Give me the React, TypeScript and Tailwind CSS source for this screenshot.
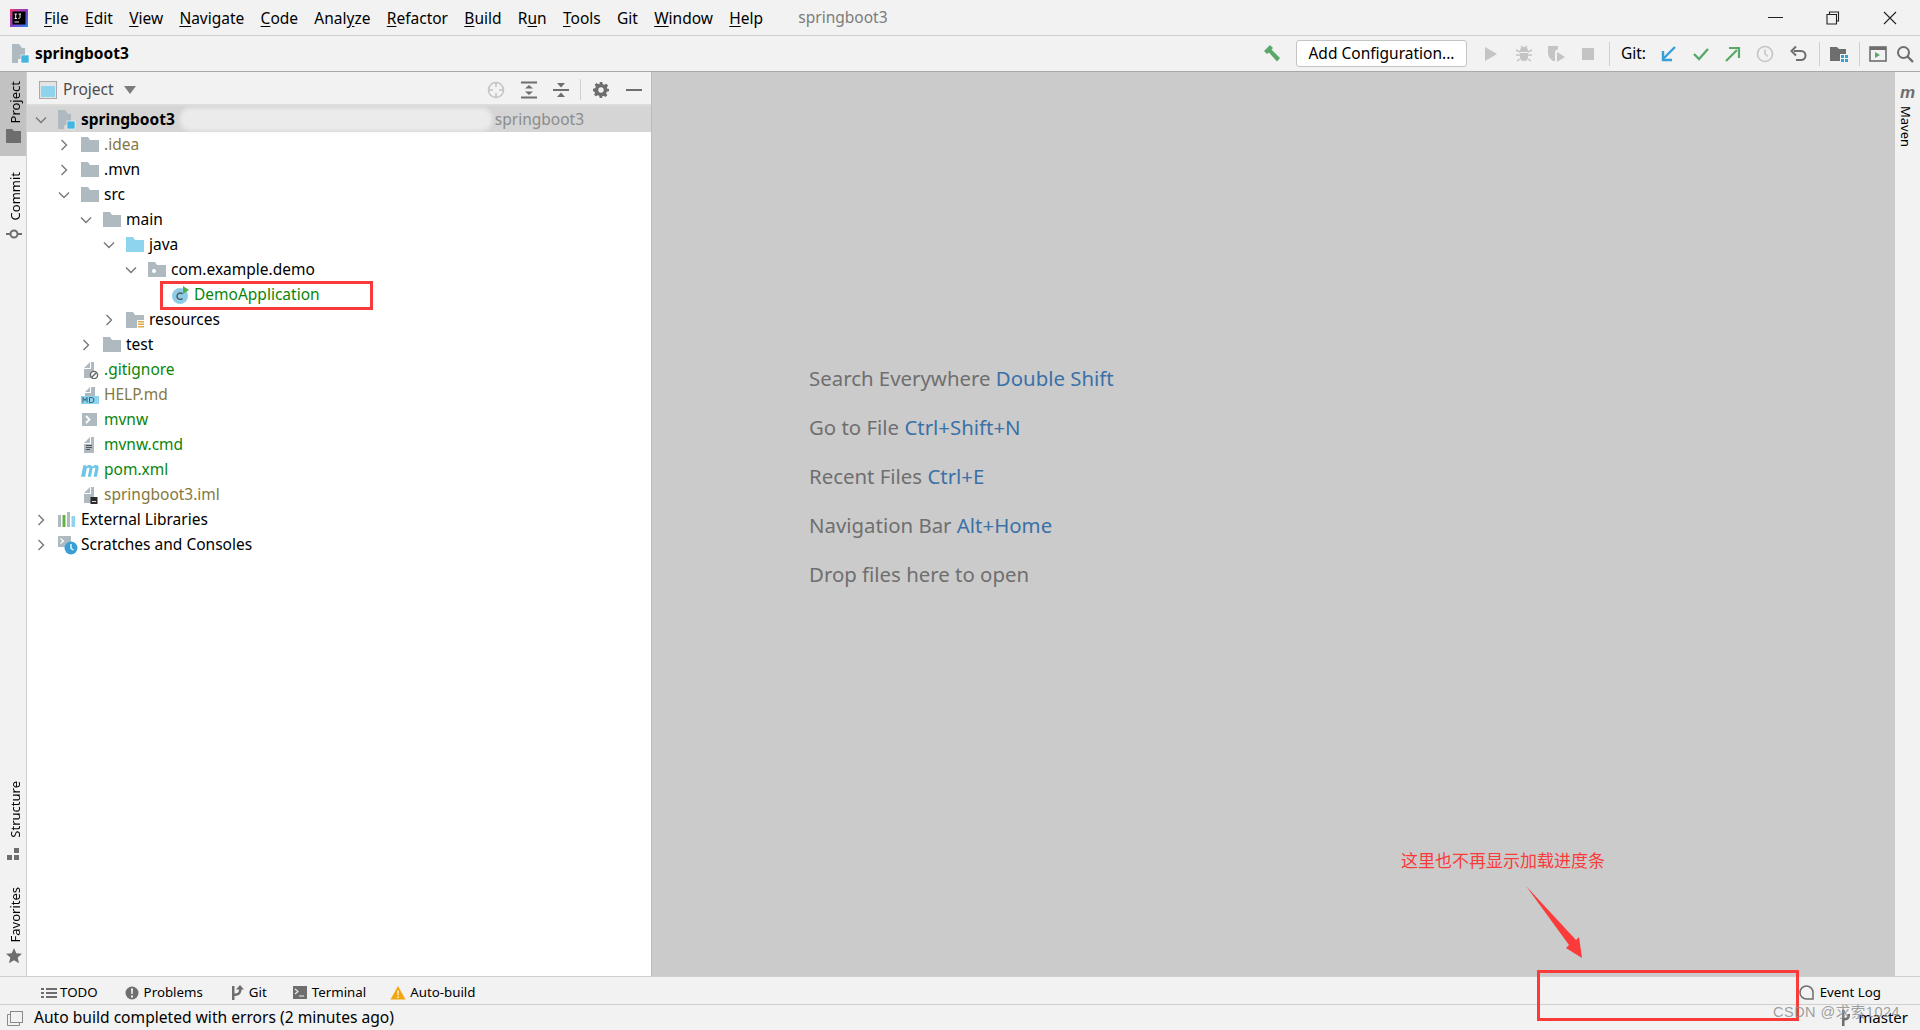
import React from "react";

const FONT = "font-['Noto_Sans','Noto_Sans_CJK_SC',sans-serif]";

const Folder = ({ color = "#afb9c0", className = "" }: { color?: string; className?: string }) => (
  <svg width="18" height="15" viewBox="0 0 18 15" className={className}>
    <path d="M0 0h7l2 3h9v12H0z" fill={color} />
  </svg>
);

const Chevron = ({ open }: { open: boolean }) => (
  <svg width="16" height="16" viewBox="0 0 16 16">
    {open ? (
      <path d="M3 5.5l5 5 5-5" fill="none" stroke="#777" strokeWidth="1.4" />
    ) : (
      <path d="M5.5 3l5 5-5 5" fill="none" stroke="#777" strokeWidth="1.4" />
    )}
  </svg>
);

const ModuleIcon = ({ size = 20 }: { size?: number }) => (
  <svg width={size} height={size} viewBox="0 0 20 20">
    <path d="M0 0h7l3 4h3v11H6v4H0z" fill="#afb9c0" />
    <rect x="9" y="11" width="8" height="8" fill="#40b6e0" stroke="#fff" strokeWidth="0.6" />
  </svg>
);

const FileBase = ({ children }: { children?: React.ReactNode }) => (
  <svg width="18" height="18" viewBox="0 0 18 18">
    <path d="M3 7l6-6v6zM3 8h7V1h3v16H3z" fill="#afb9c0" />
    {children}
  </svg>
);

type Row = { level: string; label: string; color?: string; open?: boolean; icon: React.ReactNode; chevron?: boolean };

const rows: Row[] = [
  { level: "pl-[29px]", label: ".idea", color: "text-[#85783f]", open: false, chevron: true, icon: <Folder /> },
  { level: "pl-[29px]", label: ".mvn", open: false, chevron: true, icon: <Folder /> },
  { level: "pl-[29px]", label: "src", open: true, chevron: true, icon: <Folder /> },
  { level: "pl-[51px]", label: "main", open: true, chevron: true, icon: <Folder /> },
  { level: "pl-[74px]", label: "java", open: true, chevron: true, icon: <Folder color="#8ed4ee" /> },
  {
    level: "pl-[96px]",
    label: "com.example.demo",
    open: true,
    chevron: true,
    icon: (
      <svg width="18" height="15" viewBox="0 0 18 15">
        <path d="M0 0h7l2 3h9v12H0z" fill="#afb9c0" />
        <circle cx="6" cy="9" r="2" fill="#fff" />
      </svg>
    ),
  },
  {
    level: "pl-[119px]",
    label: "DemoApplication",
    color: "text-[#0a850a]",
    icon: (
      <svg width="18" height="18" viewBox="0 0 18 18">
        <circle cx="9" cy="10" r="8" fill="#8fcde6" />
        <path d="M11.5 8a3.2 3.2 0 1 0 0 4.4" fill="none" stroke="#4a5a63" strokeWidth="1.4" />
        <path d="M12 0l6 4-6 4z" fill="#4caf50" />
      </svg>
    ),
  },
  {
    level: "pl-[74px]",
    label: "resources",
    open: false,
    chevron: true,
    icon: (
      <svg width="18" height="18" viewBox="0 0 18 18">
        <path d="M0 1h7l2 3h9v5h-7v8H0z" fill="#afb9c0" />
        <path d="M12 10h6v1.4h-6zM12 12.5h6v1.4h-6zM12 15h6v1.6h-6z" fill="#e0a94a" />
      </svg>
    ),
  },
  { level: "pl-[51px]", label: "test", open: false, chevron: true, icon: <Folder /> },
  {
    level: "pl-[29px]",
    label: ".gitignore",
    color: "text-[#0a850a]",
    icon: (
      <FileBase>
        <circle cx="13" cy="14" r="3.6" fill="#fff" stroke="#666" strokeWidth="1.4" />
        <path d="M10.5 16.5l5-5" stroke="#666" strokeWidth="1.4" />
      </FileBase>
    ),
  },
  {
    level: "pl-[29px]",
    label: "HELP.md",
    color: "text-[#85783f]",
    icon: (
      <svg width="18" height="18" viewBox="0 0 18 18">
        <path d="M4 6l5-5v5zM4 7h6V1h4v9H4z" fill="#afb9c0" />
        <rect x="0" y="10" width="18" height="8" fill="#8ed4ee" />
        <path d="M2 16.5v-5l2 3 2-3v5M8.5 11.500v5h2a2.500 2.500 0 0 0 0-5z" fill="none" stroke="#31607a" strokeWidth="1" />
      </svg>
    ),
  },
  {
    level: "pl-[29px]",
    label: "mvnw",
    color: "text-[#0a850a]",
    icon: (
      <svg width="18" height="18" viewBox="0 0 18 18">
        <rect x="1" y="2" width="15" height="13" fill="#afb9c0" />
        <path d="M5 5l3.500 3.500L5 12" fill="none" stroke="#fff" strokeWidth="1.800" />
      </svg>
    ),
  },
  {
    level: "pl-[29px]",
    label: "mvnw.cmd",
    color: "text-[#0a850a]",
    icon: (
      <FileBase>
        <path d="M5 9.500h6M5 11.500h6M5 13.500h4" stroke="#555" strokeWidth="1" />
      </FileBase>
    ),
  },
  {
    level: "pl-[29px]",
    label: "pom.xml",
    color: "text-[#0a850a]",
    icon: (
      <svg width="19" height="16" viewBox="0 0 19 16">
        <path d="M0 15L2.500 3h3l-.3 1.500C6.500 3 8 2.600 9 2.600c1.500 0 2.500.8 2.800 2C13 3.200 14.500 2.600 15.700 2.600c2.200 0 3.300 1.400 2.900 3.500L16.800 15h-3.500l1.700-8.300c.1-.8-.2-1.200-.9-1.200-.7 0-1.500.5-2 1.200L10.500 15H7.200l1.700-8.300c.1-.8-.2-1.200-.9-1.200-.7 0-1.500.5-2 1.200L4.400 15z" fill="#6fc5e6" />
      </svg>
    ),
  },
  {
    level: "pl-[29px]",
    label: "springboot3.iml",
    color: "text-[#85783f]",
    icon: (
      <FileBase>
        <rect x="9.500" y="11" width="7" height="7" fill="#2c2c2c" />
        <rect x="11" y="15" width="4" height="1" fill="#ddd" />
      </FileBase>
    ),
  },
];

const Rail = ({ label, icon, active, gap = "gap-[6px]" }: { label: string; icon: React.ReactNode; active?: boolean; gap?: string }) => (
  <div className={`flex flex-col items-center ${gap} w-[26px] pl-[1px] ${active ? "bg-[#c2c2c2] pt-[9px] pb-[13px]" : ""}`}>
    <span className="[writing-mode:vertical-rl] rotate-180 text-[13px] leading-[16px] text-black pr-[3px]">{label}</span>
    {icon}
  </div>
);

const TabIcon = ({ children }: { children: React.ReactNode }) => (
  <svg width="16" height="16" viewBox="0 0 16 16" className="shrink-0">
    {children}
  </svg>
);

const ToolIcon = ({ w = 18, children }: { w?: number; children: React.ReactNode }) => (
  <svg width={w} height="18" viewBox={`0 0 ${w} 18`} className="shrink-0">
    {children}
  </svg>
);

const Sep = ({ h = "h-[24px]" }: { h?: string }) => <div className={`w-px ${h} bg-[#cfcfcf] shrink-0`} />;

const menus: [string, string, string][] = [
  ["", "F", "ile"],
  ["", "E", "dit"],
  ["", "V", "iew"],
  ["", "N", "avigate"],
  ["", "C", "ode"],
  ["Anal", "y", "ze"],
  ["", "R", "efactor"],
  ["", "B", "uild"],
  ["R", "u", "n"],
  ["", "T", "ools"],
  ["Git", "", ""],
  ["", "W", "indow"],
  ["", "H", "elp"],
];

export default function App() {
  return (
    <div className={`${FONT} relative w-[1920px] h-[1030px] overflow-hidden bg-[#f2f2f2] flex flex-col text-[15.500px] text-black`}>
      {/* Menu bar */}
      <div className="h-[36px] shrink-0 flex items-center border-b border-[#cfcfcf] pl-[10px]">
        <svg width="18" height="18" viewBox="0 0 18 18" className="shrink-0 mr-[8px]">
          <defs>
            <linearGradient id="ij" x1="0" y1="0" x2="1" y2="1">
              <stop offset="0" stopColor="#f0366b" />
              <stop offset="0.5" stopColor="#8b3ec8" />
              <stop offset="1" stopColor="#1d8df0" />
            </linearGradient>
          </defs>
          <rect width="18" height="18" fill="url(#ij)" />
          <rect x="2.500" y="2.500" width="13" height="13" fill="#000" />
          <path d="M4.500 5h2.500M5.700 5v4.500M4.500 9.500H7M8.500 5h2.500M10 5v3.500c0 1-.8 1-1.700.8M4.500 13H9" stroke="#fff" strokeWidth="0.9" fill="none" />
        </svg>
        {menus.map(([a, u, b], i) => (
          <span key={i} className="pl-[8px] pr-[8.300px] leading-[20px] whitespace-nowrap">
            {a}
            <span className="underline underline-offset-2">{u}</span>
            {b}
          </span>
        ))}
        <span className="ml-[27px] text-[#7c7c7c]">springboot3</span>
        <div className="ml-auto flex items-center h-full">
          <div className="w-[15px] h-px bg-[#222] mr-[43px]" />
          <svg width="14" height="14" viewBox="0 0 14 14" className="mr-[43px]">
            <path d="M3.500 3V1h9v9h-2M1 3.500h9.500V13H1z" fill="none" stroke="#222" strokeWidth="1.100" />
          </svg>
          <svg width="14" height="14" viewBox="0 0 14 14" className="mr-[23px]">
            <path d="M1 1l12 12M13 1L1 13" stroke="#222" strokeWidth="1.100" />
          </svg>
        </div>
      </div>

      {/* Navigation / toolbar */}
      <div className="h-[36px] shrink-0 flex items-center border-b border-[#a9a9a9] pl-[12px]">
        <ModuleIcon />
        <span className="ml-[3px] font-bold">springboot3</span>
        <div className="ml-auto flex items-center">
          <svg width="20" height="20" viewBox="0 0 20 20" className="mr-[14px]">
            <path d="M2 7l6-6 3 3-1.500 1.500L18 14l-3 3.500-8-9L5 10z" fill="#59a869" />
          </svg>
          <div className="h-[27px] w-[171px] flex items-center justify-center bg-white border border-[#c4c4c4] rounded-[3px] mr-[16px]">
            Add Configuration...
          </div>
          <ToolIcon w={16}>
            <path d="M2 2l12 7-12 7z" fill="#c4c4c4" />
          </ToolIcon>
          <div className="w-[16px]" />
          <ToolIcon>
            <path d="M5 6a4 4 0 0 1 8 0v1H5z" fill="#c4c4c4" />
            <path d="M5 8h8v4a4 4 0 0 1-8 0z" fill="#c4c4c4" />
            <path d="M1 5l4 2M17 5l-4 2M1 10h4M17 10h-4M2 16l3-2M16 16l-3-2M6 1l2 2M12 1l-2 2" stroke="#c4c4c4" strokeWidth="1.500" />
          </ToolIcon>
          <div className="w-[14px]" />
          <ToolIcon>
            <path d="M1 1h10v3l-3 2v10H6C3 14 1 11 1 8z" fill="#c4c4c4" />
            <path d="M10 7l8 5-8 5z" fill="#c4c4c4" />
          </ToolIcon>
          <div className="w-[16px]" />
          <ToolIcon w={14}>
            <rect x="1" y="3" width="12" height="12" fill="#c4c4c4" />
          </ToolIcon>
          <div className="w-[14px]" />
          <Sep />
          <span className="ml-[11px] mr-[14px]">Git:</span>
          <ToolIcon w={16}>
            <path d="M15 2L4 13M3 6v9h9" fill="none" stroke="#389fd6" strokeWidth="2.400" />
          </ToolIcon>
          <div className="w-[17px]" />
          <ToolIcon w={16}>
            <path d="M1 9l5 5 9-10" fill="none" stroke="#59a869" strokeWidth="2.400" />
          </ToolIcon>
          <div className="w-[16px]" />
          <ToolIcon w={16}>
            <path d="M1 16L12 5M4 3h10v10" fill="none" stroke="#59a869" strokeWidth="2.200" />
          </ToolIcon>
          <div className="w-[15px]" />
          <ToolIcon>
            <circle cx="9" cy="9" r="7.500" fill="none" stroke="#c4c4c4" strokeWidth="1.600" />
            <path d="M9 4.500V9l3 2.500" fill="none" stroke="#c4c4c4" strokeWidth="1.500" />
          </ToolIcon>
          <div className="w-[16px]" />
          <ToolIcon w={17}>
            <path d="M4 6h7a4.500 4.500 0 0 1 0 9H6" fill="none" stroke="#6e6e6e" strokeWidth="2" />
            <path d="M6 1.500L1.500 6 6 10.500" fill="none" stroke="#6e6e6e" strokeWidth="2" />
          </ToolIcon>
          <div className="w-[12px]" />
          <Sep />
          <div className="w-[10px]" />
          <ToolIcon>
            <path d="M0 2h7l2 2h7v5h-6v7H0z" fill="#6e6e6e" />
            <path d="M11 10h3v3h-3zM15 10h3v3h-3zM11 14h3v3h-3zM15 14h3v3h-3z" fill="#389fd6" />
          </ToolIcon>
          <div className="w-[11px]" />
          <Sep />
          <div className="w-[9px]" />
          <ToolIcon>
            <rect x="1" y="2" width="16" height="14" fill="none" stroke="#6e6e6e" strokeWidth="1.600" />
            <rect x="1" y="2" width="16" height="3" fill="#6e6e6e" />
            <path d="M6 7l5 3-5 3z" fill="#59a869" />
          </ToolIcon>
          <div className="w-[9px]" />
          <ToolIcon>
            <circle cx="7.500" cy="7.500" r="5.500" fill="none" stroke="#6e6e6e" strokeWidth="2" />
            <path d="M11.500 11.500L17 17" stroke="#6e6e6e" strokeWidth="2.400" />
          </ToolIcon>
          <div className="w-[6px]" />
        </div>
      </div>

      {/* Main */}
      <div className="flex-1 flex min-h-0">
        {/* Left rail */}
        <div className="w-[27px] shrink-0 border-r border-[#cfcfcf] flex flex-col">
          <Rail
            active
            label="Project"
            icon={
              <svg width="15" height="14" viewBox="0 0 15 14">
                <path d="M0 0h6l2 2h7v12H0z" fill="#6e6e6e" />
              </svg>
            }
          />
          <div className="h-[16px]" />
          <Rail
            label="Commit"
            icon={
              <svg width="16" height="14" viewBox="0 0 16 14">
                <circle cx="8" cy="7" r="3.500" fill="none" stroke="#6e6e6e" strokeWidth="2" />
                <path d="M0 7h4M12 7h4" stroke="#6e6e6e" strokeWidth="2" />
              </svg>
            }
          />
          <div className="mt-auto flex flex-col gap-[27px] pb-[12px]">
            <Rail
              label="Structure"
              gap="gap-[10px]"
              icon={
                <svg width="13" height="12" viewBox="0 0 13 12">
                  <path d="M7 0h5v5H7zM0 7h5v5H0zM7 7h5v5H7z" fill="#6e6e6e" />
                </svg>
              }
            />
            <Rail
              label="Favorites"
              gap="gap-[6px]"
              icon={
                <svg width="16" height="16" viewBox="0 0 16 16">
                  <path d="M8 0l2.300 5.300 5.700.5-4.300 3.800 1.300 5.600L8 12.300l-5 2.900 1.300-5.600L0 5.800l5.700-.5z" fill="#6e6e6e" />
                </svg>
              }
            />
          </div>
        </div>

        {/* Project panel */}
        <div className="w-[624px] shrink-0 flex flex-col bg-white">
          <div className="h-[34px] shrink-0 flex items-center bg-[#f2f2f2] border-b-2 border-[#dcdcdc] pl-[12px] pt-[3px]">
            <svg width="18" height="18" viewBox="0 0 18 18">
              <rect x="0.500" y="0.500" width="17" height="17" fill="#e4e4e4" stroke="#a9a9a9" />
              <rect x="2" y="5" width="14" height="11" fill="#8ed4ee" />
            </svg>
            <span className="ml-[6px] text-[#4c4c4c]">Project</span>
            <svg width="12" height="8" viewBox="0 0 12 8" className="ml-[10px]">
              <path d="M0 0h12L6 8z" fill="#7c7c7c" />
            </svg>
            <div className="ml-auto flex items-center pr-[9px]">
              <svg width="18" height="18" viewBox="0 0 18 18">
                <circle cx="9" cy="9" r="7.500" fill="none" stroke="#c4c4c4" strokeWidth="1.600" />
                <path d="M9 1v5M9 12v5M1 9h5M12 9h5" stroke="#c4c4c4" strokeWidth="1.600" />
              </svg>
              <svg width="16" height="18" viewBox="0 0 16 18" className="ml-[16px]">
                <path d="M0 1.500h16M0 16.500h16" stroke="#6e6e6e" strokeWidth="2" />
                <path d="M8 4l4 3.500H4zM8 14l4-3.500H4z" fill="#6e6e6e" />
              </svg>
              <svg width="16" height="18" viewBox="0 0 16 18" className="ml-[16px]">
                <path d="M0 9h16" stroke="#6e6e6e" strokeWidth="2" />
                <path d="M8 6.500L4 2h8zM8 11.500L4 16h8z" fill="#6e6e6e" />
              </svg>
              <div className="w-px h-[21px] bg-[#cfcfcf] ml-[11px]" />
              <svg width="16" height="16" viewBox="0 0 24 24" className="ml-[12px]">
                <path fillRule="evenodd" d="M10 0h4l.7 3.300 2.300 1 2.800-1.800 2.800 2.800-1.800 2.800 1 2.300L24 10v4l-3.300.7-1 2.300 1.800 2.800-2.800 2.800-2.800-1.800-2.300 1L14 24h-4l-.7-3.300-2.300-1-2.800 1.800-2.800-2.800L3.200 17l-1-2.300L0 14v-4l3.300-.7 1-2.300L2.500 4.300l2.800-2.800L8 3.300l2.300-1zM12 8a4 4 0 1 0 0 8 4 4 0 0 0 0-8z" fill="#6e6e6e" />
              </svg>
              <div className="w-[16px] h-[2px] bg-[#6e6e6e] ml-[17px]" />
            </div>
          </div>

          <div className="h-[26px] shrink-0 flex items-center bg-[#d5d5d5] pl-[6px] pr-[67px] pt-[1px]">
            <Chevron open />
            <div className="ml-[9px] w-[20px] shrink-0">
              <ModuleIcon />
            </div>
            <span className="ml-[3px] font-bold">springboot3</span>
            <span className="ml-auto text-[#8c8c8c]">springboot3</span>
          </div>

          {rows.map((r) => (
            <div key={r.label} className={`h-[25px] shrink-0 flex items-center ${r.level}`}>
              <div className="w-[16px] shrink-0 flex justify-center">{r.chevron ? <Chevron open={!!r.open} /> : null}</div>
              <div className="ml-[9px] w-[18px] shrink-0 flex justify-center">{r.icon}</div>
              <span className={`ml-[5px] whitespace-nowrap ${r.color ?? ""}`}>{r.label}</span>
            </div>
          ))}

          <div className="h-[25px] shrink-0 flex items-center pl-[6px]">
            <Chevron open={false} />
            <svg width="18" height="17" viewBox="0 0 18 17" className="ml-[9px]">
              <path d="M0 4h3v12H0z" fill="#afb9c0" />
              <path d="M4.500 4h3v12h-3z" fill="#62b543" />
              <path d="M9 1h3v15H9z" fill="#afb9c0" />
              <path d="M13.500 5h3.500v11h-3.500z" fill="#8ed4ee" />
            </svg>
            <span className="ml-[5px]">External Libraries</span>
          </div>
          <div className="h-[25px] shrink-0 flex items-center pl-[6px]">
            <Chevron open={false} />
            <svg width="20" height="20" viewBox="0 0 20 20" className="ml-[9px] -mr-[2px] shrink-0">
              <rect x="0" y="1" width="13" height="11" fill="#afb9c0" />
              <path d="M2.500 3.500l3 2.500-3 2.500" fill="none" stroke="#fff" strokeWidth="1.200" />
              <circle cx="13" cy="13" r="6.500" fill="#389fd6" />
              <path d="M13 9v4.500l2.500 1.500" fill="none" stroke="#fff" strokeWidth="1.300" />
            </svg>
            <span className="ml-[5px]">Scratches and Consoles</span>
          </div>
        </div>

        {/* Editor */}
        <div className="flex-1 bg-[#cbcbcb] border-l border-[#bcbcbc] pl-[157px] pt-[292px] flex flex-col gap-[21px] text-[20.400px] leading-[28px] text-[#6f6f6f]">
          <div>
            Search Everywhere <span className="text-[#3a71a8]">Double Shift</span>
          </div>
          <div>
            Go to File <span className="text-[#3a71a8]">Ctrl+Shift+N</span>
          </div>
          <div>
            Recent Files <span className="text-[#3a71a8]">Ctrl+E</span>
          </div>
          <div>
            Navigation Bar <span className="text-[#3a71a8]">Alt+Home</span>
          </div>
          <div>Drop files here to open</div>
        </div>

        {/* Right rail */}
        <div className="w-[25px] shrink-0 flex flex-col items-center pt-[13px]">
          <span className="font-bold italic text-[#6e6e6e] text-[17px] leading-[16px] font-['Liberation_Sans',sans-serif]">m</span>
          <span className="[writing-mode:vertical-rl] text-[13px] leading-[16px] mt-[5px] mr-[3px]">Maven</span>
        </div>
      </div>

      {/* Tool window bar */}
      <div className="h-[29px] shrink-0 flex items-center border-t border-[#cfcfcf] text-[13.300px] border-b pl-[41px] pt-[4px]">
        <TabIcon>
          <path d="M0 3h3v2H0zM0 7h3v2H0zM0 11h3v2H0zM5 3h11v2H5zM5 7h11v2H5zM5 11h11v2H5z" fill="#6e6e6e" />
        </TabIcon>
        <span className="ml-[3px]">TODO</span>
        <div className="w-[26px]" />
        <TabIcon>
          <circle cx="8" cy="8" r="6.500" fill="#6e6e6e" />
          <path d="M7 3.500h2l-.3 5.500H7.300zM7 10.500h2v2H7z" fill="#f2f2f2" />
        </TabIcon>
        <span className="ml-[4px]">Problems</span>
        <div className="w-[27px]" />
        <TabIcon>
          <path d="M2 1h2.500v14H2zM4.500 8.500c3 0 4.500-1 4.500-4V4h2.500v.5c0 4.500-3 6.500-7 6.500z" fill="#6e6e6e" />
          <path d="M10 0l4 4.500H6z" fill="#6e6e6e" />
        </TabIcon>
        <span className="ml-[3px]">Git</span>
        <div className="w-[25px]" />
        <TabIcon>
          <rect x="1" y="1" width="14" height="13" fill="#6e6e6e" />
          <path d="M3 4l3 2.500L3 9M7 11h5" fill="none" stroke="#f2f2f2" strokeWidth="1.100" />
        </TabIcon>
        <span className="ml-[4px]">Terminal</span>
        <div className="w-[24px]" />
        <TabIcon>
          <path d="M8 1l7.500 13.500H.500z" fill="#f2a60d" />
          <path d="M7.300 5.500h1.400l-.2 5h-1zM7.300 11.500h1.400V13H7.300z" fill="#fff" />
        </TabIcon>
        <span className="ml-[4px]">Auto-build</span>
        <div className="ml-auto flex items-center pr-[39px]">
          <svg width="15" height="15" viewBox="0 0 15 15">
            <path d="M7.500 1a6.500 6.500 0 0 0 0 13H14V7.500A6.500 6.500 0 0 0 7.500 1z" fill="none" stroke="#6e6e6e" strokeWidth="1.500" />
          </svg>
          <span className="ml-[6px]">Event Log</span>
        </div>
      </div>

      {/* Status bar */}
      <div className="h-[25px] shrink-0 flex items-center pl-[7px] text-[15.600px]">
        <svg width="16" height="16" viewBox="0 0 16 16">
          <rect x="3.500" y="1.500" width="12" height="11" fill="none" stroke="#8a8a8a" />
          <path d="M3.500 4.500H.5v11h12v-3" fill="none" stroke="#8a8a8a" />
        </svg>
        <span className="ml-[11px]">Auto build completed with errors (2 minutes ago)</span>
        <div className="ml-auto flex items-center pr-[12px]">
          <svg width="14" height="16" viewBox="0 0 14 16">
            <path d="M3 0h2.500v16H3zM5.500 8c2.500 0 3-1 3-3V4H11v1c0 3.500-2 5.500-5.500 5.500z" fill="#6e6e6e" />
          </svg>
          <span className="ml-[5px] text-[15px]">master</span>
        </div>
      </div>

      {/* Overlays: annotations added on the screenshot */}
      <div className="absolute left-[180px] top-[108px] w-[312px] h-[23px] bg-[#ebebeb] rounded-[10px] blur-[2px]" />
      <div className="absolute left-[160px] top-[281px] w-[213px] h-[29px] border-[3px] border-[#f83a3a]" />
      <div className="absolute left-[1537px] top-[970px] w-[262px] h-[51px] border-[3px] border-[#fb3a3a]" />
      <div className="absolute left-[1401px] top-[848px] text-[17px] leading-[24px] text-[#fb3a3a] whitespace-nowrap font-['Noto_Sans_CJK_SC',sans-serif]">
        这里也不再显示加载进度条
      </div>
      <svg width="70" height="85" viewBox="0 0 70 85" className="absolute left-[1520px] top-[880px]">
        <path d="M6 6L56 60l3-3 3 21-16-10 3-3z" fill="#fb3a3a" />
      </svg>
      <div className="absolute left-[1773px] top-[1002px] text-[14.500px] leading-[20px] tracking-[0.5px] text-[#8f8f8f]/85 whitespace-nowrap font-['Liberation_Sans','Noto_Sans_CJK_SC',sans-serif]">
        CSDN @求索1024
      </div>
    </div>
  );
}
